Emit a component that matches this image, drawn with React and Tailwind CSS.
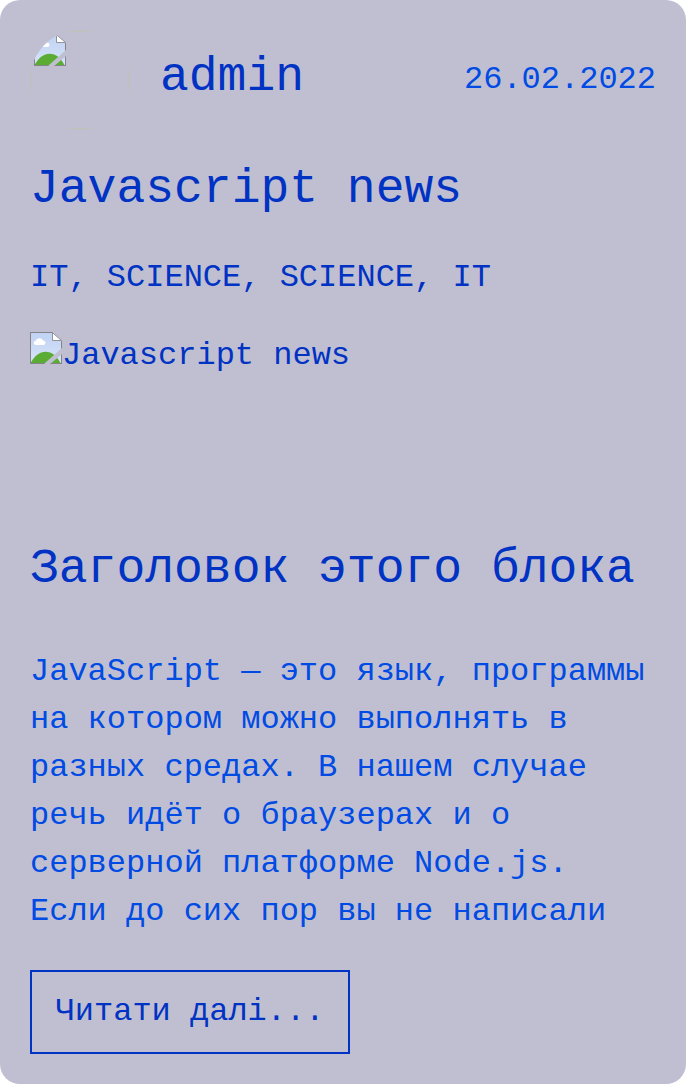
function MissingImage({ id }) {
  return (
    <svg className="block h-8 w-8 shrink-0" viewBox="0 0 32 32" aria-hidden="true">
      <defs>
        <linearGradient id={id + "-sky"} x1="0" y1="0" x2="0" y2="1">
          <stop offset="0" stopColor="#bfd2f3" />
          <stop offset="1" stopColor="#d8e4f8" />
        </linearGradient>
        <clipPath id={id + "-page"}>
          <path d="M0 0H22.5L32 9.5V16L14 32H0ZM32 22V32H20Z" />
        </clipPath>
      </defs>
      <g clipPath={"url(#" + id + "-page)"}>
        <path d="M0 0H32V32H0Z" fill={"url(#" + id + "-sky)"} />
        <path d="M5.5 13a2.2 2.2 0 0 1 .1-4.3a4.1 4.1 0 0 1 7.4-.3a2.4 2.4 0 0 1 1 4.6Z" fill="#fff" />
        <path d="M0 32C4 24 10 19.8 15.5 19.8C22 19.8 27 24 31 32Z" fill="#5aac35" />
        <path d="M.5 0V31.5H32M31.5 9V32M0 .5H23" fill="none" stroke="#848488" />
      </g>
      <path d="M22.5 .7L31.5 8.5H22.5Z" fill="#fff" stroke="#929296" />
    </svg>
  );
}

export default function App() {
  return (
    <article className="flex h-[1084px] w-[686px] flex-col items-start rounded-[20px] bg-[#c0bfd1] p-[30px] font-['Liberation_Mono',monospace] text-[32px] leading-[48px] text-[#0032c3]">
      <header className="flex h-[100px] w-full items-center">
        <div className="h-[100px] w-[100px] overflow-hidden rounded-full">
          <div className="h-full w-full border-2 border-[#c0c0c0] p-0.5">
            <MissingImage id="avatar" />
          </div>
        </div>
        <span className="mb-1.5 ml-[30px] text-[48px] leading-[72px]">admin</span>
        <time className="ml-auto text-[#004be3]">26.02.2022</time>
      </header>
      <h1 className="mt-[23px] text-[48px] leading-[72px]">Javascript news</h1>
      <p className="mt-[29px]">IT, SCIENCE, SCIENCE, IT</p>
      <div className="mt-[30px] flex h-[201px] items-start">
        <MissingImage id="cover" />
        <span className="leading-[48px]">Javascript news</span>
      </div>
      <h2 className="text-[48px] leading-[72px]">Заголовок этого блока</h2>
      <p className="mt-[43px] whitespace-nowrap text-[#004be3]">
        JavaScript — это язык, программы<br />
        на котором можно выполнять в<br />
        разных средах. В нашем случае<br />
        речь идёт о браузерах и о<br />
        серверной платформе Node.js.<br />
        Если до сих пор вы не написали
      </p>
      <button className="mt-[34px] h-[84px] w-[320px] shrink-0 border-2 border-[#0032c3]">Читати далі...</button>
    </article>
  );
}
